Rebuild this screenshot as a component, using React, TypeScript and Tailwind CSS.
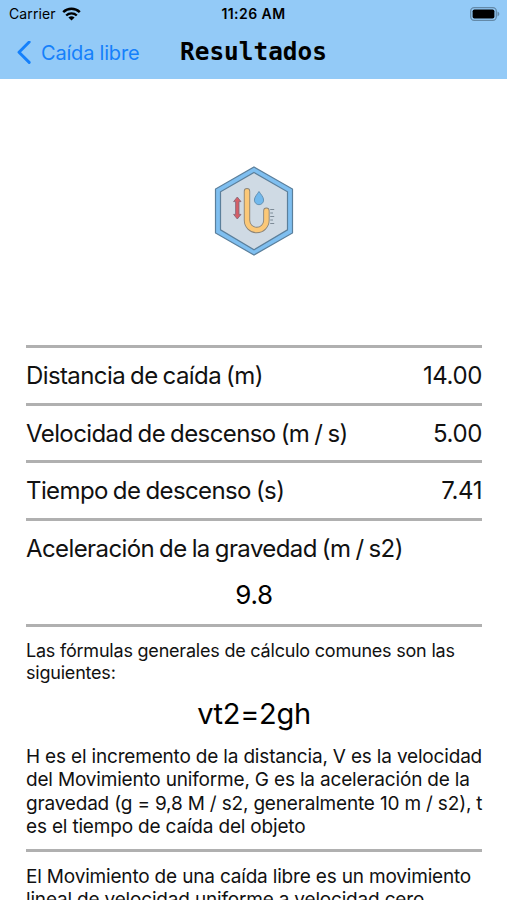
import type { ReactNode } from "react";

const measurements = [
  { label: "Distancia de caída (m)", value: "14.00" },
  { label: "Velocidad de descenso (m / s)", value: "5.00" },
  { label: "Tiempo de descenso (s)", value: "7.41" },
];

export default function App() {
  return (
    <div className="flex h-[900px] w-[507px] flex-col overflow-hidden bg-white font-['Inter',sans-serif] text-[#111]">
      <header className="h-[79px] shrink-0 bg-[#93caf7] text-black">
        <StatusBar />
        <NavBar />
      </header>

      <main className="pr-[25px] pl-[26px]">
        <div className="flex h-[266px] items-start justify-center pt-[86px]">
          <FallIcon />
        </div>

        <Divider />
        {measurements.map((m) => (
          <div key={m.label}>
            <div className="flex h-[54.5px] items-center justify-between pt-[2px] text-2xl whitespace-nowrap">
              <span className="tracking-[-0.6px] [word-spacing:-1.1px]">
                {m.label}
              </span>
              <span className="tracking-[-0.4px]">{m.value}</span>
            </div>
            <Divider />
          </div>
        ))}

        <div className="h-[103.5px] pt-[10px] whitespace-nowrap">
          <p className="text-2xl leading-[36px] tracking-[-0.6px] [word-spacing:-1.1px]">
            Aceleración de la gravedad (m / s2)
          </p>
          <p className="mt-[9px] text-center text-[26px] leading-[38px] tracking-[-0.4px] text-black">
            9.8
          </p>
        </div>
        <Divider />

        <Paragraph className="mt-[13px] text-[18px] leading-[22px] tracking-[-0.21px]">
          Las fórmulas generales de cálculo comunes son las
          <br />
          siguientes:
        </Paragraph>
        <p className="mt-[10px] text-center text-[29px] leading-[40px] tracking-[-0.3px] text-black">
          vt2=2gh
        </p>
        <Paragraph className="mt-[11px] text-[19px] leading-[23.3px] tracking-[-0.18px]">
          H es el incremento de la distancia, V es la velocidad
          <br />
          del Movimiento uniforme, G es la aceleración de la
          <br />
          gravedad (g = 9,8 M / s2, generalmente 10 m / s2), t
          <br />
          es el tiempo de caída del objeto
        </Paragraph>
        <div className="mt-[11px]">
          <Divider />
        </div>
        <Paragraph className="mt-[13px] text-[19px] leading-[23.3px] tracking-[-0.18px]">
          El Movimiento de una caída libre es un movimiento
          <br />
          lineal de velocidad uniforme a velocidad cero
        </Paragraph>
      </main>
    </div>
  );
}

function StatusBar() {
  return (
    <div className="grid h-[27px] grid-cols-3 items-center pr-[7px] pl-[9px] text-[14px] leading-none whitespace-nowrap">
      <div className="flex items-center gap-[6px]">
        <span className="tracking-[0.1px]">Carrier</span>
        <svg width="19" height="14" viewBox="0 0 19 14" fill="none">
          <path d="M1.2 5.2a12 12 0 0 1 16.6 0" stroke="#000" strokeWidth="2.5" />
          <path d="M4.2 8.5a7.7 7.7 0 0 1 10.6 0" stroke="#000" strokeWidth="2.4" />
          <path d="M9.5 13.6 6.4 10.6a4.5 4.5 0 0 1 6.2 0Z" fill="#000" />
        </svg>
      </div>
      <span className="-ml-[2px] text-center font-semibold tracking-[0.45px]">
        11:26 AM
      </span>
      <svg
        className="justify-self-end"
        width="30"
        height="14"
        viewBox="0 0 30 14"
      >
        <rect x=".7" y=".7" width="25.6" height="12.6" rx="3.5" fill="none" stroke="#6389a8" strokeWidth="1.3" />
        <rect x="2.6" y="2.5" width="21.8" height="9" rx="1.8" fill="#000" />
        <path d="M27.5 4.6c2.4.8 2.4 4 0 4.8Z" fill="#6389a8" />
      </svg>
    </div>
  );
}

function NavBar() {
  return (
    <nav className="grid h-[50px] grid-cols-[1fr_auto_1fr] items-center px-[17px] whitespace-nowrap">
      <div className="flex items-center gap-[10px] text-[#1580fb]">
        <svg width="14" height="23" viewBox="0 0 14 23" fill="none">
          <path
            d="M12.2 1 2 11.2l10.2 10.2"
            stroke="currentColor"
            strokeWidth="2.9"
            strokeLinecap="round"
            strokeLinejoin="round"
          />
        </svg>
        <span className="pt-px text-[20px] tracking-[-0.2px]">Caída libre</span>
      </div>
      <h1 className="font-['DejaVu_Sans_Mono',monospace] text-[24.4px] font-bold">
        Resultados
      </h1>
    </nav>
  );
}

function Divider() {
  return <div className="h-[3px] bg-[#b0b0b0]" />;
}

function Paragraph({
  className,
  children,
}: {
  className: string;
  children: ReactNode;
}) {
  return <p className={`whitespace-nowrap ${className}`}>{children}</p>;
}

function FallIcon() {
  return (
    <svg width="80" height="92" viewBox="0 0 80 92" fill="none">
      <path d="M40 2 78.5 24v44L40 90 1.5 68V24Z" fill="#7fbff0" stroke="#5b7f9b" strokeWidth="1.2" />
      <path d="M40 7.5 73.5 26.8v38L40 84.8 6.5 64.8v-38Z" fill="#cfdae4" stroke="#5b7f9b" strokeWidth="1.2" />
      <path
        d="M23.3 32 27 36.600h-2v12.800h2L23.300 54 19.600 49.400h2V36.600h-2Z"
        fill="#d55f68"
        stroke="#806575"
        strokeWidth=".8"
      />
      <path
        d="M33 26.300v29a9.700 9.700 0 0 0 19.400 0v-9.500"
        stroke="#8b8478"
        strokeWidth="6.400"
        strokeLinecap="round"
      />
      <path
        d="M33 26.300v29a9.700 9.700 0 0 0 19.400 0v-9.500"
        stroke="#fbc878"
        strokeWidth="4.600"
        strokeLinecap="round"
      />
      <path
        d="M45 26.500c2 3 4.600 5.600 4.600 8.600a4.600 4.600 0 0 1-9.200 0c0-3 2.600-5.600 4.600-8.600Z"
        fill="#72b9ed"
        stroke="#5e8bae"
        strokeWidth=".9"
      />
      <path
        d="M56.200 44.500h4M56.200 48h2.800M56.200 51.500h4M56.200 55h2.800M56.200 58.500h4"
        stroke="#7d8b97"
        strokeWidth="1.200"
      />
    </svg>
  );
}
